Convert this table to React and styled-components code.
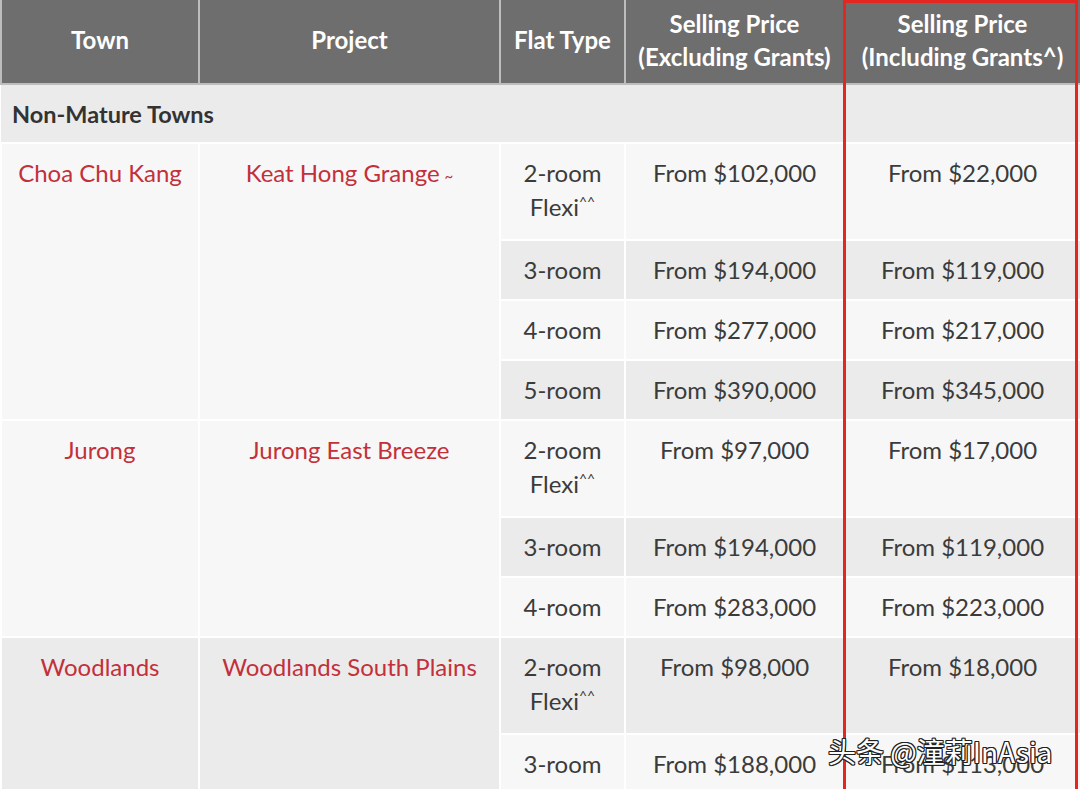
import React from "react";
import styled, { createGlobalStyle } from "styled-components";

const Global = createGlobalStyle`
  html, body { margin: 0; padding: 0; background: #ffffff; overflow: hidden; }
  body { font-family: Lato, "Noto Sans", sans-serif; }
`;

const Wrap = styled.div`
  position: relative;
  width: 1080px;
`;

const Table = styled.table`
  width: 1080px;
  table-layout: fixed;
  border-collapse: collapse;
  font-family: Lato, "Noto Sans", sans-serif;
  font-size: 24px;
  color: #3b3b3b;
`;

const Th = styled.th`
  background: #6e6e6e;
  color: #ffffff;
  font-weight: 700;
  font-size: 24px;
  line-height: 33px;
  height: 84px;
  box-sizing: border-box;
  padding: 0 4px 4px;
  border: 2px solid #bdbdbd;
  border-top: none;
  text-align: center;
  vertical-align: middle;
`;

const SectionCell = styled.td`
  background: #ebebeb;
  font-weight: 700;
  font-size: 23.5px;
  color: #333333;
  height: 59px;
  box-sizing: border-box;
  padding: 0 11px;
  border: 2px solid #ffffff;
  border-left: none;
  text-align: left;
  vertical-align: middle;
`;

const Td = styled.td`
  background: ${(p) => (p.$shade ? "#ebebeb" : "#f7f7f7")};
  color: ${(p) => (p.$red ? "#c3303a" : "#3b3b3b")};
  line-height: 34px;
  padding: 12px 6px 12px;
  border: 2px solid #ffffff;
  text-align: center;
  vertical-align: top;
  height: ${(p) => (p.$tall ? "97px" : "59.5px")};
  box-sizing: border-box;
`;

const Sup = styled.sup`
  font-size: 14px;
  line-height: 0;
  vertical-align: 9px;
`;

const Tilde = styled.span`
  font-size: 15px;
  margin-left: 5px;
`;

const Highlight = styled.div`
  position: absolute;
  left: 843px;
  top: 0;
  width: 235px;
  height: 820px;
  border: 3px solid #e3261f;
  box-sizing: border-box;
  pointer-events: none;
`;

const Watermark = styled.div`
  position: absolute;
  left: 828px;
  top: 733px;
  font-family: "Noto Sans CJK SC", "Noto Sans", sans-serif;
  font-size: 28px;
  line-height: 36px;
  color: #ffffff;
  white-space: nowrap;
  text-shadow: 1px 1px 0 #222, -1px -1px 0 #222, 1px -1px 0 #222, -1px 1px 0 #222,
    0 1px 0 #222, 0 -1px 0 #222, 1px 0 0 #222, -1px 0 0 #222;
`;

const groups = [
  {
    town: "Choa Chu Kang",
    project: "Keat Hong Grange",
    tilde: true,
    units: [
      ["2", "$102,000", "$22,000"],
      ["3", "$194,000", "$119,000"],
      ["4", "$277,000", "$217,000"],
      ["5", "$390,000", "$345,000"],
    ],
  },
  {
    town: "Jurong",
    project: "Jurong East Breeze",
    units: [
      ["2", "$97,000", "$17,000"],
      ["3", "$194,000", "$119,000"],
      ["4", "$283,000", "$223,000"],
    ],
  },
  {
    town: "Woodlands",
    project: "Woodlands South Plains",
    units: [
      ["2", "$98,000", "$18,000"],
      ["3", "$188,000", "$113,000"],
    ],
  },
];

function FlatType({ n }) {
  if (n === "2") {
    return (
      <>
        2-room
        <br />
        Flexi<Sup>^^</Sup>
      </>
    );
  }
  return <>{n}-room</>;
}

export default function App() {
  let idx = 0;
  const rows = [];
  groups.forEach((g, gi) => {
    g.units.forEach((u, ui) => {
      const shade = idx % 2 === 1;
      const tall = u[0] === "2";
      rows.push(
        <tr key={`${gi}-${ui}`}>
          {ui === 0 && (
            <>
              <Td $red $shade={shade} rowSpan={g.units.length}>
                {g.town}
              </Td>
              <Td $red $shade={shade} rowSpan={g.units.length}>
                {g.project}
                {g.tilde && <Tilde>~</Tilde>}
              </Td>
            </>
          )}
          <Td $shade={shade} $tall={tall}>
            <FlatType n={u[0]} />
          </Td>
          <Td $shade={shade} $tall={tall}>From {u[1]}</Td>
          <Td $shade={shade} $tall={tall}>From {u[2]}</Td>
        </tr>
      );
      idx += 1;
    });
  });

  return (
    <>
      <Global />
      <Wrap>
        <Table>
          <colgroup>
            <col style={{ width: 198 }} />
            <col style={{ width: 301 }} />
            <col style={{ width: 125 }} />
            <col style={{ width: 219 }} />
            <col style={{ width: 237 }} />
          </colgroup>
          <thead>
            <tr>
              <Th>Town</Th>
              <Th>Project</Th>
              <Th>Flat Type</Th>
              <Th>
                Selling Price
                <br />
                (Excluding Grants)
              </Th>
              <Th>
                Selling Price
                <br />
                (Including Grants^)
              </Th>
            </tr>
          </thead>
          <tbody>
            <tr>
              <SectionCell colSpan={5}>Non-Mature Towns</SectionCell>
            </tr>
            {rows}
          </tbody>
        </Table>
        <Highlight />
        <Watermark>头条 @潼莉InAsia</Watermark>
      </Wrap>
    </>
  );
}
